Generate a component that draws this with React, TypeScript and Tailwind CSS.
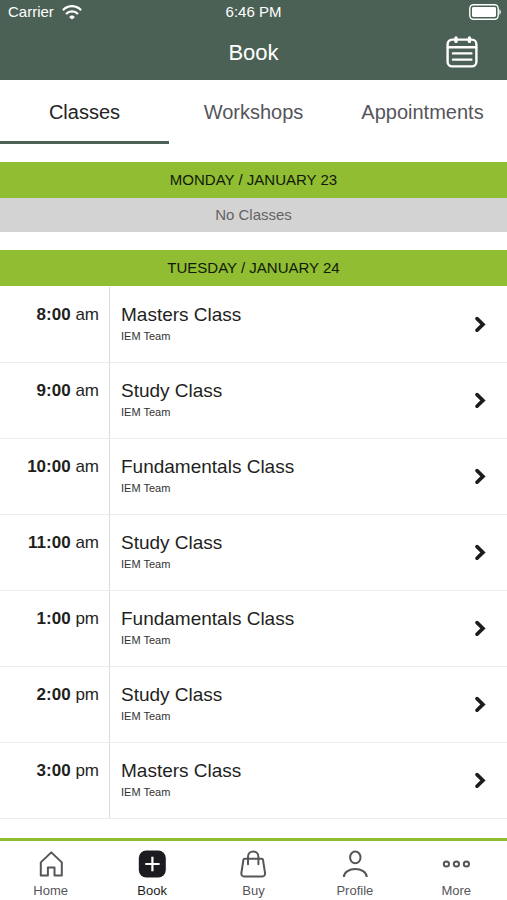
import React from 'react';

type ClassItem = {
  time: string;
  period: string;
  title: string;
  team: string;
};

const classes: ClassItem[] = [
  { time: '8:00', period: 'am', title: 'Masters Class', team: 'IEM Team' },
  { time: '9:00', period: 'am', title: 'Study Class', team: 'IEM Team' },
  { time: '10:00', period: 'am', title: 'Fundamentals Class', team: 'IEM Team' },
  { time: '11:00', period: 'am', title: 'Study Class', team: 'IEM Team' },
  { time: '1:00', period: 'pm', title: 'Fundamentals Class', team: 'IEM Team' },
  { time: '2:00', period: 'pm', title: 'Study Class', team: 'IEM Team' },
  { time: '3:00', period: 'pm', title: 'Masters Class', team: 'IEM Team' },
];

const tabs = ['Classes', 'Workshops', 'Appointments'];

const WifiIcon: React.FC = () => (
  <svg width="20" height="15" viewBox="0 0 20 15" fill="none" stroke="currentColor" strokeWidth="2.2" aria-hidden="true">
    <path d="M0.9 5.2C6 -0.3 14 -0.3 19.1 5.2" />
    <path d="M4 8.9C7.4 5.4 12.6 5.4 16 8.9" />
    <path d="M10 14.6 7.2 12.2C8 9.8 12 9.8 12.8 12.2Z" fill="currentColor" stroke="none" />
  </svg>
);

const BatteryIcon: React.FC = () => (
  <svg width="32" height="16" viewBox="0 0 32 16" aria-hidden="true">
    <rect x="0.8" y="0.8" width="28.4" height="14.4" rx="3.6" fill="none" stroke="currentColor" strokeWidth="1.4" />
    <rect x="3" y="3" width="24" height="10" rx="1.4" fill="currentColor" />
    <path d="M30.4 5.2c1.8 0.8 1.8 4.8 0 5.6z" fill="currentColor" />
  </svg>
);

const CalendarIcon: React.FC = () => (
  <svg width="32" height="32" viewBox="0 0 32 32" fill="none" stroke="currentColor" strokeWidth="2.4" strokeLinecap="round" aria-hidden="true">
    <rect x="1.6" y="3.6" width="28.8" height="26.8" rx="4.6" />
    <path d="M2 11.2h28" />
    <path d="M10 2v3.4M23.4 2v3.4" strokeWidth="3.4" />
    <path d="M7 17.4h18.4M7 23.6h18.4" />
  </svg>
);

const ChevronIcon: React.FC = () => (
  <svg width="12" height="18" viewBox="0 0 12 18" fill="none" stroke="#1c1c1e" strokeWidth="3.6" strokeLinecap="round" aria-hidden="true">
    <path d="M3 2.6 9 8.4l-6 5.8" />
  </svg>
);

const HomeIcon: React.FC = () => (
  <svg width="28" height="28" viewBox="0 0 28 28" fill="none" stroke="currentColor" strokeWidth="2" strokeLinejoin="round" aria-hidden="true">
    <path d="M14.3 2.4 3.8 12.4V25.6H10.9V17.4H17.5V25.6H24.8V12.4Z" />
  </svg>
);

const BookIcon: React.FC = () => (
  <svg width="28" height="28" viewBox="0 0 28 28" aria-hidden="true">
    <rect x="0.8" y="0.5" width="27" height="27" rx="7.5" fill="currentColor" />
    <path d="M14.4 6.8v14.4M7.2 14h14.4" stroke="#fff" strokeWidth="2.2" />
  </svg>
);

const BuyIcon: React.FC = () => (
  <svg width="28" height="28" viewBox="0 0 28 28" fill="none" stroke="currentColor" strokeWidth="2" strokeLinejoin="round" strokeLinecap="round" aria-hidden="true">
    <path d="M5.6 8.8h17.2q1 0 1.2 1l2 13q0.3 3.6-2.8 3.6H5.2q-3.1 0-2.8-3.6l2-13q0.2-1 1.2-1Z" />
    <path d="M9 14.2V6.8C9 -0.2 19.4 -0.2 19.4 6.8V14.2" />
  </svg>
);

const ProfileIcon: React.FC = () => (
  <svg width="28" height="28" viewBox="0 0 28 28" fill="none" stroke="currentColor" strokeWidth="2" aria-hidden="true">
    <ellipse cx="14.3" cy="7.4" rx="5.2" ry="5.9" />
    <path d="M2.8 27C3.2 16.4 25.4 16.4 25.8 27" />
  </svg>
);

const MoreIcon: React.FC = () => (
  <svg width="28" height="28" viewBox="0 0 28 28" fill="none" stroke="currentColor" strokeWidth="2" aria-hidden="true">
    <circle cx="4.4" cy="14" r="2.6" />
    <circle cx="14.4" cy="14" r="2.6" />
    <circle cx="24.4" cy="14" r="2.6" />
  </svg>
);

const navItems = [
  { label: 'Home', icon: <HomeIcon />, active: false },
  { label: 'Book', icon: <BookIcon />, active: true },
  { label: 'Buy', icon: <BuyIcon />, active: false },
  { label: 'Profile', icon: <ProfileIcon />, active: false },
  { label: 'More', icon: <MoreIcon />, active: false },
];

const DayHeading: React.FC<{ children: React.ReactNode }> = ({ children }) => (
  <h2 className="flex h-9 items-center justify-center bg-[#90bd31] text-[15px] text-[#10190a]">
    {children}
  </h2>
);

const ClassRow: React.FC<{ item: ClassItem }> = ({ item }) => (
  <li className="border-b border-[#ececee]">
    <a href="#" className="flex h-[75px] text-[#1f1f21]">
      <div className="w-[110px] shrink-0 border-r border-[#d9dbe0] pr-[10px] pt-4 text-right text-[17px] leading-6">
        <strong className="font-bold">{item.time}</strong> {item.period}
      </div>
      <div className="flex-1 pl-[11px] pt-4">
        <div className="text-[19px] leading-6">{item.title}</div>
        <div className="text-[11px] leading-[18px] text-[#333335]">{item.team}</div>
      </div>
      <div className="flex items-center pr-[21px]">
        <ChevronIcon />
      </div>
    </a>
  </li>
);

const App: React.FC = () => {
  return (
    <div className="flex min-h-screen flex-col bg-white font-['Liberation_Sans',Arial,sans-serif]">
      <header className="bg-[#4c6155] text-white">
        <div className="grid h-6 grid-cols-3 items-center px-[6px] text-[15px]">
          <div className="flex items-center gap-2 pl-[2px]">
            <span>Carrier</span>
            <WifiIcon />
          </div>
          <span className="text-center">6:46 PM</span>
          <div className="flex justify-end">
            <BatteryIcon />
          </div>
        </div>
        <div className="grid h-14 grid-cols-3 items-center px-[29px]">
          <h1 className="col-start-2 text-center text-[22px]">Book</h1>
          <button type="button" aria-label="Calendar" className="justify-self-end">
            <CalendarIcon />
          </button>
        </div>
      </header>

      <div role="tablist" className="grid h-16 grid-cols-3">
        {tabs.map((tab, index) => (
          <button
            key={tab}
            type="button"
            role="tab"
            aria-selected={index === 0}
            className={
              index === 0
                ? 'border-b-[3px] border-[#4c6155] pt-[2px] text-xl text-[#232325]'
                : 'border-b-[3px] border-transparent pt-[2px] text-xl text-[#55555a]'
            }
          >
            {tab}
          </button>
        ))}
      </div>

      <main className="flex-1 pt-[18px]">
        <section className="mb-[18px]">
          <DayHeading>MONDAY / JANUARY 23</DayHeading>
          <p className="flex h-[34px] items-center justify-center bg-[#d3d3d3] text-[15px] text-[#636366]">
            No Classes
          </p>
        </section>
        <section>
          <DayHeading>TUESDAY / JANUARY 24</DayHeading>
          <ul className="pt-px">
            {classes.map((item) => (
              <ClassRow key={item.time} item={item} />
            ))}
          </ul>
        </section>
      </main>

      <nav className="grid grid-cols-5 border-t-[3px] border-[#90bd31] bg-white pt-[9px]">
        {navItems.map((item) => (
          <a
            key={item.label}
            href="#"
            className={
              item.active
                ? 'flex flex-col items-center gap-1 text-[13px] leading-[18px] text-[#1c1c20]'
                : 'flex flex-col items-center gap-1 text-[13px] leading-[18px] text-[#55555a]'
            }
          >
            {item.icon}
            {item.label}
          </a>
        ))}
      </nav>
    </div>
  );
};

export default App;
